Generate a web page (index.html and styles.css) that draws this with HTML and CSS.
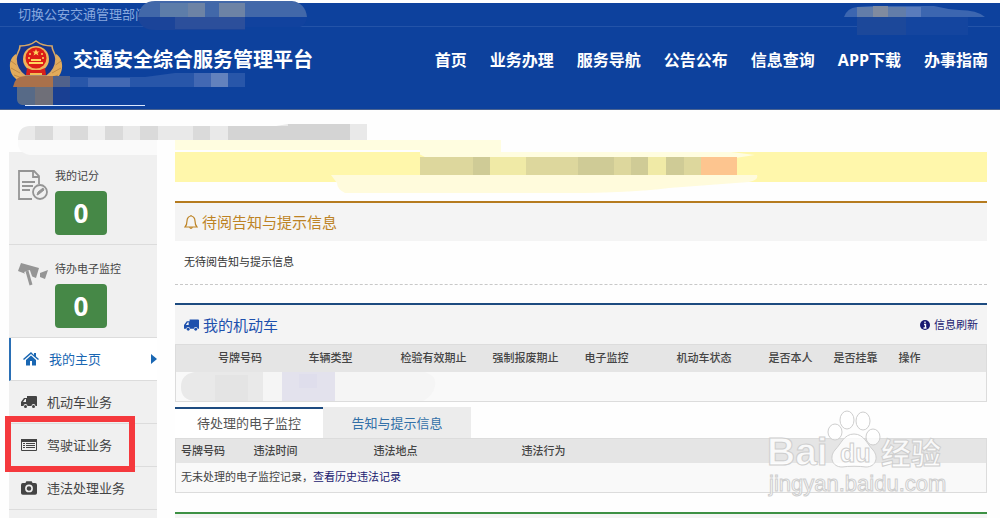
FILE: index.html
```html
<!DOCTYPE html>
<html lang="zh-CN">
<head>
    <meta charset="UTF-8">
    <meta name="viewport" content="width=device-width, initial-scale=1.0">
    <title>交通安全综合服务管理平台</title>
    <link rel="stylesheet" href="styles.css">
</head>
<body>
    <header class="header">
        <div class="topbar"><a href="#">切换公安交通管理部门</a></div>
        <div class="banner">
            <svg class="emblem" width="54" height="44" viewBox="0 0 54 44">
                <path d="M7 14C0 18-1 29 4 36l8 8h30l8-8c5-7 4-18-3-22l-2 11-7 11H16L9 25z" fill="#e3ab5b"/>
                <path d="M2 21l8 6M2 28l9 5M5 35l8 3M52 21l-8 6M52 28l-9 5M49 35l-8 3" stroke="#c08a48"/>
                <path d="M27 1c5 4 10 5 16 5 0 5 4 8 4 13 0 8-5 14-9 17H16C12 33 7 27 7 19c0-5 4-8 4-13 6 0 11-1 16-5z" fill="#17358c" stroke="#d9a866" stroke-width="1.6"/>
                <circle cx="27" cy="19" r="13" fill="#f0b35a"/>
                <circle cx="27" cy="18" r="10.500" fill="#dc1c17"/>
                <path d="M27 9l1 2.500h2.500l-2 1.500 1 2.500-2.500-1.500-2.500 1.500 1-2.500-2-1.500H26zM20 22h14v2H20zM22 19h10v2H22z" fill="#ffd45d"/>
                <g fill="#ffd45d"><circle cx="21" cy="14" r="1"/><circle cx="33" cy="14" r="1"/><circle cx="20" cy="18" r="1"/><circle cx="34" cy="18" r="1"/></g>
                <path d="M18 28l5 2h8l5-2 1 7H17z" fill="#d8201a"/>
                <path d="M21 33h12v2H21z" fill="#f2bd54"/>
            </svg>
            <h1 class="site-name">交通安全综合服务管理平台</h1>
            <nav class="main-nav">
                <a href="#">首页</a>
                <a href="#">业务办理</a>
                <a href="#">服务导航</a>
                <a href="#">公告公布</a>
                <a href="#">信息查询</a>
                <a href="#">APP下载</a>
                <a href="#">办事指南</a>
            </nav>
        </div>
        <!-- masked account details -->
        <svg class="mask mask-left" width="310" height="110" viewBox="0 0 310 110">
            <path d="M138 17c2-11 7-16 17-16h137c9 1 14 7 15 16z" fill="#4268a9"/>
            <path d="M160 3h28v14h-28z" fill="#5d7da9"/>
            <path d="M188 3h17v14h-17zM219 3h26v14h-26z" fill="#6d83a5"/>
            <path d="M138 17h107v13h-90q-15 0-17-13z" fill="#1b4499"/>
            <path d="M175 17h70v12h-70z" fill="#2c4f9b"/>
            <path d="M245 17h62q-1 8-7 10h-55z" fill="#11429e"/>
            <path d="M13 87q2-11 12-11h28v11z" fill="#aa714b"/>
            <path d="M53 76h17v11H53z" fill="#50618b"/>
            <path d="M70 77h75l30-4h70v14H70z" fill="#2856a9"/>
            <path d="M88 78h42v9H88zM194 73h34v14h-34z" fill="#4268b3"/>
            <path d="M211 73h17v14h-17z" fill="#6382bd"/>
            <path d="M17 87h36v18H22q-5-1-5-6z" fill="#576a87"/>
            <path d="M35 87h18v18H35z" fill="#6f6f78"/>
            <path d="M53 87h17v17H53z" fill="#193f92"/>
            <path d="M25 105.500h120" stroke="#dbe8ff"/>
        </svg>
        <svg class="mask mask-right" width="160" height="36" viewBox="0 0 160 36">
            <path d="M4 17q3-9 13-10l14-1h63q12 3 25 4 18 0 26 7z" fill="#3c66b0"/>
            <path d="M17 7h49v10H17z" fill="#627da9"/>
            <path d="M33 6h15v11H33z" fill="#808b9f"/>
            <path d="M66 7h15v10H66z" fill="#5a7cbc"/>
            <path d="M17 17h49v18H17z" fill="#1c489a"/>
            <path d="M66 17h62v18H66z" fill="#14459f"/>
        </svg>
    </header>

    <div class="page">
        <aside class="sidebar">
            <section class="stat">
                <svg class="stat-icon" width="30" height="32" viewBox="0 0 30 32" fill="none" stroke="#959595" stroke-width="1.800">
                    <path d="M14 29H1V1h15l5 5v8M15 1v6h6M4 12h13M4 16h11M4 20h8"/>
                    <circle cx="22" cy="22" r="7"/>
                    <path d="M19 25l1-3 5-4 1 2-5 4z" fill="#959595" stroke-width="1"/>
                </svg>
                <div class="stat-info">
                    <span class="stat-label">我的记分</span>
                    <strong class="stat-value">0</strong>
                </div>
            </section>
            <section class="stat">
                <svg class="stat-icon" width="30" height="32" viewBox="0 0 30 32" fill="#959595">
                    <path d="M3 0l18 5-3 10L0 8zM22 10l8-3-3 9-5-2z"/>
                    <path d="M9 8l5 14" stroke="#f0f0f0" stroke-width="6"/>
                    <path d="M9 8l4 14" stroke="#959595" stroke-width="3"/>
                </svg>
                <div class="stat-info">
                    <span class="stat-label">待办电子监控</span>
                    <strong class="stat-value">0</strong>
                </div>
            </section>
            <nav class="side-nav">
                <a class="side-link active" href="#">
                    <svg class="side-icon" width="16" height="14" viewBox="0 0 16 14" fill="currentColor">
                        <path d="M8 0L0 7l1 1 7-6 7 6 1-1-3-2.500V1h-2v2zM8 3.500L3 8v5.500h4V9h2v4.500h4V8z"/>
                    </svg>
                    我的主页
                    <svg class="side-arrow" width="6" height="10" viewBox="0 0 6 10"><path d="M0 0l6 5-6 5z" fill="currentColor"/></svg>
                </a>
                <a class="side-link" href="#">
                    <svg class="side-icon" width="16" height="14" viewBox="0 0 16 14" fill="currentColor">
                        <path d="M6 1h9q1 0 1 1v9h-1.500a2 2 0 0 0-4 0h-4a2 2 0 0 0-4 0H0V7l3-4h3zM5 4H4L2 7h3z" fill-rule="evenodd"/>
                        <circle cx="4.500" cy="11.500" r="1.500"/><circle cx="12.500" cy="11.500" r="1.500"/>
                    </svg>
                    机动车业务
                </a>
                <a class="side-link marked" href="#">
                    <svg class="side-icon" width="16" height="14" viewBox="0 0 16 14">
                        <path d="M.5 1.500h15v11H.5z" fill="none" stroke="currentColor"/>
                        <path d="M0 1h16v3H0z" fill="currentColor"/>
                        <path d="M2 5.500h2M5 5.500h9M2 7.500h2M5 7.500h9M2 9.500h2M5 9.500h9" stroke="currentColor"/>
                    </svg>
                    驾驶证业务
                </a>
                <a class="side-link" href="#">
                    <svg class="side-icon" width="16" height="14" viewBox="0 0 18 15">
                        <path d="M2 2h3l1-2h6l1 2h3q2 0 2 2v9q0 2-2 2H2q-2 0-2-2V4q0-2 2-2z" fill="currentColor"/>
                        <circle cx="9" cy="8" r="3.500" fill="none" stroke="#f0f0f0" stroke-width="1.800"/>
                    </svg>
                    违法处理业务
                </a>
            </nav>
        </aside>

        <main class="content">
            <div class="notice"></div>

            <section class="panel panel-gold">
                <h2 class="panel-title">
                    <svg width="14" height="16" viewBox="0 0 14 16" fill="none" stroke="currentColor" stroke-width="1.200">
                        <path d="M7 1v1M1 13c2-2 2-4 2-6 0-3 2-5 4-5s4 2 4 5c0 2 0 4 2 6zM5.500 13q1.500 3 3 0"/>
                    </svg>
                    待阅告知与提示信息
                </h2>
                <p class="panel-text">无待阅告知与提示信息</p>
            </section>

            <section class="panel panel-blue">
                <h2 class="panel-title">
                    <svg width="15" height="14" viewBox="0 0 16 14" fill="currentColor">
                        <path d="M6 1h9q1 0 1 1v9h-1.500a2 2 0 0 0-4 0h-4a2 2 0 0 0-4 0H0V7l3-4h3zM5 4H4L2 7h3z" fill-rule="evenodd"/>
                        <circle cx="4.500" cy="11.500" r="1.500"/><circle cx="12.500" cy="11.500" r="1.500"/>
                    </svg>
                    我的机动车
                    <a class="refresh" href="#">
                        <svg width="10" height="10" viewBox="0 0 10 10">
                            <circle cx="5" cy="5" r="5" fill="currentColor"/>
                            <path d="M5 1.500V3M4 4.500h1.500V8M3.500 8h3" fill="none" stroke="#fff" stroke-width="1.300"/>
                        </svg>
                        信息刷新
                    </a>
                </h2>
                <table class="grid vehicles">
                    <thead>
                        <tr>
                            <th>号牌号码</th>
                            <th>车辆类型</th>
                            <th>检验有效期止</th>
                            <th>强制报废期止</th>
                            <th>电子监控</th>
                            <th>机动车状态</th>
                            <th class="narrow">是否本人</th>
                            <th class="narrow">是否挂靠</th>
                            <th class="rest">操作</th>
                        </tr>
                    </thead>
                    <tbody>
                        <tr>
                            <td colspan="9">
                                <svg class="row-mask" width="256" height="29" viewBox="0 0 256 29">
                                    <path d="M14 0h230q12 4 10 14t-12 15H14Q0 28 0 15T14 0z" fill="#f5f5f5"/>
                                    <path d="M14 0h68v29H14Q0 28 0 15T14 0z" fill="#e9e9e9"/>
                                    <path d="M34 3h33v26H34z" fill="#e4e4e4"/>
                                    <path d="M101 0h53v29h-53z" fill="#e3e2ed"/>
                                    <path d="M118 2h18v14h-18z" fill="#dfdeec"/>
                                </svg>
                            </td>
                        </tr>
                    </tbody>
                </table>

                <div class="tabs">
                    <button class="tab active" type="button">待处理的电子监控</button>
                    <button class="tab" type="button">告知与提示信息</button>
                </div>
                <table class="grid violations">
                    <thead>
                        <tr>
                            <th class="plate">号牌号码</th>
                            <th class="time">违法时间</th>
                            <th class="place">违法地点</th>
                            <th>违法行为</th>
                        </tr>
                    </thead>
                    <tbody>
                        <tr>
                            <td colspan="4">无未处理的电子监控记录，<a class="history" href="#">查看历史违法记录</a></td>
                        </tr>
                    </tbody>
                </table>
            </section>

            <section class="panel panel-green"></section>
        </main>

        <!-- masked welcome line and notice text -->
        <svg class="mask mask-page" width="780" height="84" viewBox="0 0 780 84">
            <path d="M18 30q0-14 12-14h246l12-2h79v16z" fill="#e9e9e9"/>
            <path d="M35 16h18v14H35zM70 16h18v14H70zM105 16h18v14h-18zM140 16h18v14h-18zM193 16h17v14h-17z" fill="#dadada"/>
            <path d="M53 16h17v14H53zM88 16h17v14H88z" fill="#efefef"/>
            <path d="M228 16h60v-2h62v16H228z" fill="#d4d4d4"/>
            <path d="M18 30h139v15H30q-9-1-12-9z" fill="#fafafa"/>
            <path d="M175 30h326v12h230l24 3-20 3H420v-8H175z" fill="#fffde0"/>
            <path d="M175 45l100-1 20-2h120l10 5H175z" fill="#fff7ab"/>
            <path d="M331 65h426q2 5-8 7l-80 6q-40 5-100 5H345q-8-4-8-10z" fill="#fffbdc"/>
            <path d="M420 47h317v18H420z" fill="#ddd79d"/>
            <path d="M473 47h17v18h-17zM578 47h36v18h-36zM631 47h17v18h-17zM666 47h18v18h-18z" fill="#cfcb96"/>
            <path d="M490 47h36v18h-36zM648 47h18v18h-18z" fill="#f0eaa6"/>
            <path d="M701 47h36v18h-36z" fill="#fdc58f"/>
        </svg>
    </div>

    <svg class="watermark" width="182" height="88" viewBox="0 0 182 88">
        <g class="watermark-shape">
            <ellipse cx="82" cy="17" rx="7" ry="9"/>
            <ellipse cx="98" cy="18" rx="7" ry="9"/>
            <ellipse cx="70" cy="29" rx="7" ry="8"/>
            <ellipse cx="108" cy="34" rx="7" ry="8"/>
            <path d="M89 31c-10 0-13 10-19 16-6 7-3 17 7 17 7-1 17-1 24 0 10 0 13-10 7-17-6-6-9-16-19-16z"/>
        </g>
        <g class="watermark-text">
            <text class="wm-brand" x="2" y="62">Bai</text>
            <text class="wm-du" x="75" y="59">du</text>
            <text class="wm-cn" x="116" y="61">经验</text>
            <text class="wm-url" x="4" y="88">jingyan.baidu.com</text>
        </g>
    </svg>
</body>
</html>
```

FILE: styles.css
```css
*,
*::after {
    box-sizing: border-box;
}
body {
    position: relative;
    display: flex;
    flex-direction: column;
    min-height: 100vh;
    margin: 0;
    background: #fefefe;
    color: #444;
    font-family: "Open Sans", "Noto Sans CJK SC", sans-serif;
    font-size: 11px;
    line-height: 16px;
}
a {
    color: inherit;
    text-decoration: none;
}
h1, h2, p {
    margin: 0;
}
svg {
    flex: none;
}
.mask {
    position: absolute;
    pointer-events: none;
}

/* header */
.header {
    position: relative;
    margin-top: 3px;
    background: #0d419d;
    border-bottom: 1px solid #4a6391;
}
.topbar {
    padding: 2px 18px;
    border-bottom: 1px solid #2353a8;
    color: #88a8de;
    font-size: 13px;
    line-height: 19px;
}
.banner {
    display: flex;
    align-items: flex-start;
    height: 82px;
    padding: 13px 12px 0 9px;
}
.site-name {
    margin-left: 10px;
    color: #fff;
    font-size: 20px;
    line-height: 40px;
}
.main-nav {
    display: flex;
    gap: 23px;
    margin-left: auto;
    color: #fff;
    font-size: 16px;
    font-weight: bold;
    line-height: 40px;
}
.mask-left {
    top: -3px;
    left: 0;
}
.mask-right {
    top: -3px;
    right: 0;
}

/* layout */
.page {
    position: relative;
    display: flex;
    flex: 1;
    gap: 18px;
    padding: 42px 13px 0 9px;
}
.mask-page {
    top: 0;
    left: 0;
}
.sidebar {
    flex: none;
    width: 148px;
    background: #f0f0f0;
}
.content {
    display: flex;
    flex: 1;
    flex-direction: column;
    min-width: 0;
}

/* sidebar */
.stat {
    display: flex;
    gap: 7px;
    padding: 16px 9px 9px;
    border-bottom: 1px solid #dcdcdc;
}
.stat-icon {
    margin-top: 2px;
}
.stat-info {
    display: flex;
    flex-direction: column;
    align-items: flex-start;
    gap: 7px;
}
.stat-value {
    width: 52px;
    border-radius: 4px;
    background: #468847;
    color: #fff;
    font-size: 26px;
    line-height: 44px;
    text-align: center;
}
.side-link {
    position: relative;
    display: flex;
    align-items: center;
    gap: 10px;
    height: 43px;
    padding-left: 12px;
    border-bottom: 1px solid #dcdcdc;
    font-size: 13px;
}
.side-link.active {
    border-left: 2px solid #2a6fb5;
    background: #fff;
    color: #1a67b3;
}
.side-arrow {
    margin-left: auto;
}
.marked::after {
    content: "";
    position: absolute;
    top: -8px;
    left: -4px;
    width: 130px;
    height: 56px;
    border: 6px solid #f5393d;
}

/* panels */
.notice {
    height: 30px;
    margin-bottom: 19px;
    background: #fff7ab;
}
.panel {
    border-top: 2px solid;
}
.panel-gold {
    margin-bottom: 18px;
    border-top-color: #b57b1f;
}
.panel-blue {
    margin-bottom: 19px;
    border-top-color: #1d4b80;
}
.panel-green {
    flex: 1;
    border-top-color: #3d9144;
    background: #f4f4f4;
}
.panel-title {
    display: flex;
    align-items: center;
    gap: 4px;
    height: 38px;
    padding: 0 9px;
    background: #f4f4f4;
    font-size: 15px;
    font-weight: normal;
}
.panel-gold .panel-title {
    color: #bd8325;
}
.panel-blue .panel-title {
    height: 39px;
    color: #1d50ad;
}
.panel-text {
    padding: 13px 9px 14px;
    border-bottom: 1px dashed #c8c8c8;
    color: #333;
}
.refresh {
    display: flex;
    align-items: center;
    gap: 4px;
    margin-left: auto;
    color: #191970;
    font-size: 11px;
}

/* tables */
.grid {
    width: 100%;
    border: 1px solid #dcdcdc;
    border-collapse: collapse;
    background: #f9f9f9;
    table-layout: fixed;
}
.grid th,
.grid td {
    height: 29px;
    padding: 0 5px;
    text-align: left;
}
.grid th {
    height: 27px;
    background: #e5e5e5;
    font-weight: 500;
}
.vehicles th {
    width: 92px;
    padding: 0;
}
.vehicles th:first-child {
    width: 133px;
    padding-left: 42px;
}
.vehicles .narrow {
    width: 65px;
}
.vehicles .rest {
    width: auto;
}
.row-mask {
    display: block;
}
.violations th {
    height: 25px;
}
.violations .plate {
    width: 73px;
}
.violations .time {
    width: 120px;
}
.violations .place {
    width: 148px;
}
.history {
    color: #191970;
}

/* tabs */
.tabs {
    display: flex;
    margin-top: 5px;
}
.tab {
    width: 148px;
    height: 31px;
    padding: 0;
    border: 0;
    border-top: 2px solid #ececec;
    background: #ececec;
    color: #3370a8;
    font: inherit;
    font-size: 13px;
}
.tab.active {
    border-top-color: #1d4b80;
    background: #fff;
    color: #555;
}

/* watermark */
.watermark {
    position: absolute;
    top: 403px;
    right: 53px;
    overflow: visible;
    pointer-events: none;
}
.watermark-shape,
.watermark-text {
    fill: #fff;
    fill-opacity: 0.8;
    stroke: #cecece;
    stroke-width: 1px;
}
.watermark-text {
    font-family: "Liberation Sans", "Noto Sans CJK SC", sans-serif;
    font-weight: bold;
}
.wm-brand {
    font-size: 39px;
}
.wm-du {
    font-size: 25px;
}
.wm-cn {
    font-size: 30px;
}
.wm-url {
    font-size: 22px;
    font-weight: normal;
}
```
